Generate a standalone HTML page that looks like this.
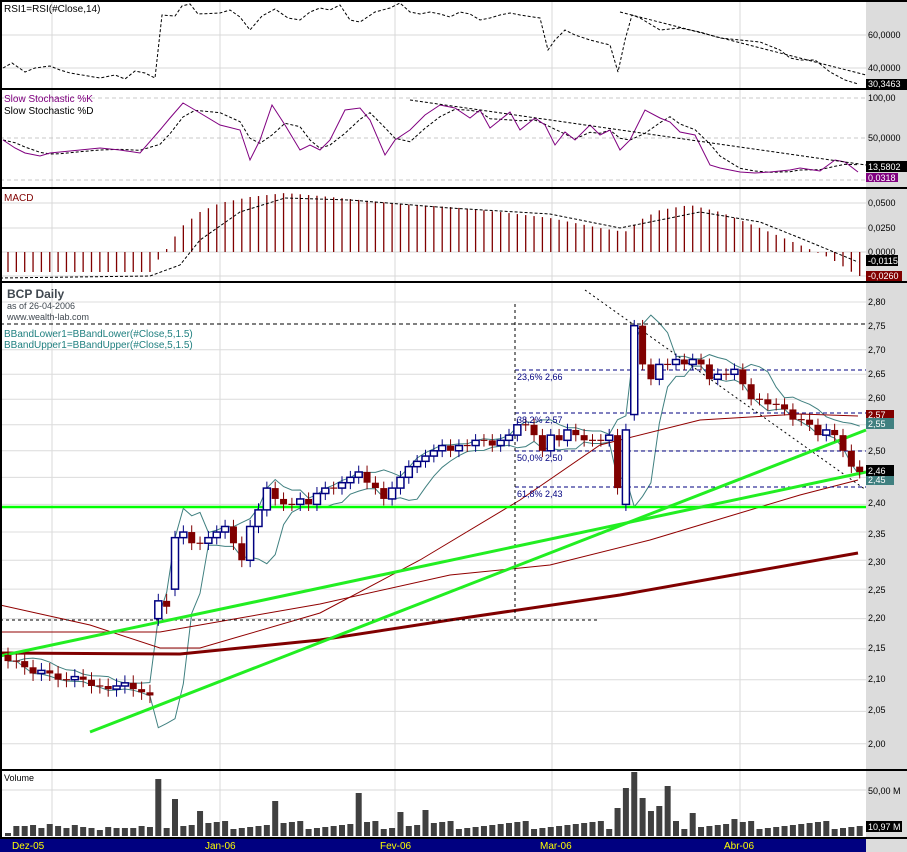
<!DOCTYPE html>
<html><head><meta charset="utf-8"><style>
html,body{margin:0;padding:0;background:#fff;}
svg{display:block;font-family:"Liberation Sans",sans-serif;}
</style></head><body>
<svg id="c" width="907" height="852" xmlns="http://www.w3.org/2000/svg">
<rect x="0" y="0" width="907" height="852" fill="#fff"/>
<rect x="866" y="0" width="41" height="852" fill="#dcdcdc"/>
<g id="grid"></g>
<g id="draw"></g>
<g stroke="#000" stroke-width="2">
<line x1="0" y1="1" x2="907" y2="1"/>
<line x1="0" y1="89" x2="907" y2="89"/>
<line x1="0" y1="188" x2="907" y2="188"/>
<line x1="0" y1="282" x2="907" y2="282"/>
<line x1="0" y1="770" x2="907" y2="770"/>
<line x1="0" y1="838" x2="907" y2="838"/>
<line x1="1" y1="0" x2="1" y2="852"/>
</g>
<rect x="0" y="839" width="866" height="13" fill="#000080"/>
<g font-size="10" fill="#ffff00">
<text x="12" y="849">Dez-05</text><text x="205" y="849">Jan-06</text><text x="380" y="849">Fev-06</text><text x="540" y="849">Mar-06</text><text x="724" y="849">Abr-06</text>
</g>
<g font-size="10" fill="#000">
<text x="4" y="12">RSI1=RSI(#Close,14)</text>
<text x="4" y="102" fill="#800080">Slow Stochastic %K</text>
<text x="4" y="114">Slow Stochastic %D</text>
<text x="4" y="201" fill="#800000">MACD</text>
<text x="4" y="781" font-size="9">Volume</text>
<text x="7" y="298" font-size="12" font-weight="bold" fill="#404850">BCP Daily</text>
<text x="7" y="309" font-size="9" fill="#404850">as of 26-04-2006</text>
<text x="7" y="320" font-size="9" fill="#404850">www.wealth-lab.com</text>
<text x="4" y="337" fill="#208080">BBandLower1=BBandLower(#Close,5,1.5)</text>
<text x="4" y="348" fill="#208080">BBandUpper1=BBandUpper(#Close,5,1.5)</text>
<g font-size="9" fill="#000080">
<text x="517" y="380">23,6% 2,66</text><text x="517" y="423">38,2% 2,57</text><text x="517" y="461">50,0% 2,50</text><text x="517" y="497">61,8% 2,43</text>
</g>
</g>
<g font-size="9" fill="#000">
<text x="868" y="38">60,0000</text><text x="868" y="71">40,0000</text>
<rect x="866" y="79" width="41" height="10" fill="#000"/><text x="868" y="87" fill="#fff">30,3463</text>
<text x="868" y="101">100,00</text><text x="868" y="141">50,0000</text>
<rect x="866" y="173" width="32" height="9" fill="#800080"/><text x="868" y="181" fill="#fff">0,0318</text>
<rect x="866" y="161" width="41" height="11" fill="#000"/><text x="868" y="170" fill="#fff">13,5802</text>
<text x="868" y="206">0,0500</text><text x="868" y="231">0,0250</text><text x="868" y="255">0,0000</text>
<rect x="866" y="255" width="32" height="11" fill="#000"/><text x="868" y="264" fill="#fff">-0,0115</text>
<rect x="866" y="271" width="36" height="10" fill="#800000"/><text x="868" y="279" fill="#fff">-0,0260</text>
<text x="868" y="305">2,80</text><text x="868" y="329">2,75</text><text x="868" y="353">2,70</text><text x="868" y="377">2,65</text><text x="868" y="401">2,60</text><text x="868" y="454">2,50</text><text x="868" y="506">2,40</text><text x="868" y="537">2,35</text><text x="868" y="565">2,30</text><text x="868" y="593">2,25</text><text x="868" y="621">2,20</text><text x="868" y="651">2,15</text><text x="868" y="682">2,10</text><text x="868" y="713">2,05</text><text x="868" y="747">2,00</text>
<rect x="866" y="410" width="28" height="10" fill="#800000"/><text x="868" y="418" fill="#fff">2,57</text>
<rect x="866" y="418" width="28" height="11" fill="#408080"/><text x="868" y="427" fill="#fff">2,55</text>
<rect x="866" y="474" width="28" height="11" fill="#408080"/><text x="868" y="483" fill="#fff">2,45</text>
<rect x="866" y="465" width="28" height="11" fill="#000"/><text x="868" y="474" fill="#fff">2,46</text>
<text x="868" y="794">50,00 M</text>
<rect x="866" y="821" width="36" height="11" fill="#000"/><text x="868" y="830" fill="#fff">10,97 M</text>
</g>
</svg>
<script>
var NS="http://www.w3.org/2000/svg";
var G=document.getElementById("grid"),D=document.getElementById("draw");
function el(p,t,a){var e=document.createElementNS(NS,t);for(var k in a)e.setAttribute(k,a[k]);p.appendChild(e);return e;}
function pl(p,pts,st,w,dash){var s=pts.map(function(q){return q[0].toFixed(1)+","+q[1].toFixed(1)}).join(" ");var a={points:s,fill:"none",stroke:st,"stroke-width":w};if(dash)a["stroke-dasharray"]=dash;return el(p,"polyline",a);}
function ln(p,x1,y1,x2,y2,st,w,dash){var a={x1:x1,y1:y1,x2:x2,y2:y2,stroke:st,"stroke-width":w};if(dash)a["stroke-dasharray"]=dash;return el(p,"line",a);}
[52,220,395,552,740].forEach(function(x){ln(G,x,0,x,838,"#d8d8d8",1);});
[35,68].forEach(function(y){ln(G,0,y,866,y,"#d8d8d8",1);});
[98,138,180].forEach(function(y){ln(G,0,y,866,y,"#c8c8c8",1,"4,3");});
[203,228,252,276].forEach(function(y){ln(G,0,y,866,y,"#d8d8d8",1);});
function py(p){return 302+1313*Math.log(2.8/p);}
[2.8,2.7,2.65,2.6,2.55,2.5,2.45,2.4,2.35,2.3,2.25,2.2,2.15,2.1,2.05,2.0].forEach(function(p){ln(G,0,py(p),866,py(p),"#dcdcdc",1);});
ln(G,0,790,866,790,"#d8d8d8",1);
pl(D,[[3,68],[12,63],[25,72],[35,68],[50,66],[60,70],[70,73],[100,78],[115,75],[125,79],[135,71],[145,73],[155,78],[162,15],[175,16],[182,6],[190,4],[198,14],[220,13],[230,10],[240,17],[250,30],[262,16],[275,9],[288,18],[300,20],[310,12],[320,8],[330,10],[340,5],[350,20],[360,22],[375,12],[390,8],[400,3],[410,12],[420,14],[430,12],[440,14],[450,17],[460,12],[470,14],[480,20],[490,18],[500,15],[510,13],[520,15],[540,18],[548,50],[555,40],[565,30],[575,35],[590,40],[610,45],[618,72],[625,40],[632,15],[640,18],[660,30],[680,28],[700,32],[720,38],[740,40],[760,42],[780,50],[790,58],[800,60],[815,60],[830,72],[845,80],[858,84]],"#000",1,"3,2");
ln(D,620,12,866,75,"#000",1,"3,2");
var K=[[3,140],[15,148],[25,153],[40,156],[50,153],[60,152],[80,150],[100,148],[120,150],[140,153],[160,130],[170,118],[183,103],[195,110],[220,125],[240,130],[250,160],[260,140],[272,105],[285,125],[300,150],[310,145],[320,150],[330,140],[345,110],[360,108],[370,120],[385,155],[395,140],[410,130],[425,115],[440,105],[455,108],[470,118],[480,110],[490,128],[500,120],[510,112],[520,130],[535,118],[545,125],[555,145],[565,132],[575,140],[590,125],[600,135],[610,130],[620,150],[630,140],[645,110],[660,118],[670,122],[680,132],[695,135],[710,165],[720,168],[740,172],[755,173],[770,172],[790,170],[800,168],[820,171],[835,160],[845,162],[858,172]];
var Dd=K.map(function(q,i){var a=K[Math.max(0,i-1)],b=K[Math.max(0,i-2)];return [q[0],(q[1]+a[1]+b[1])/3];});
pl(D,Dd,"#000",1,"3,2");
pl(D,K,"#800080",1);
ln(D,410,100,866,165,"#000",1,"3,2");
var C=[2.13,2.13,2.12,2.11,2.115,2.11,2.10,2.10,2.105,2.10,2.09,2.09,2.085,2.09,2.095,2.085,2.08,2.075,2.23,2.22,2.34,2.35,2.33,2.33,2.34,2.35,2.36,2.33,2.30,2.36,2.39,2.43,2.41,2.40,2.40,2.41,2.40,2.42,2.43,2.43,2.44,2.45,2.46,2.44,2.43,2.41,2.43,2.45,2.47,2.48,2.49,2.50,2.51,2.50,2.51,2.51,2.52,2.52,2.51,2.52,2.53,2.55,2.55,2.53,2.50,2.53,2.52,2.54,2.53,2.52,2.52,2.52,2.53,2.43,2.54,2.75,2.67,2.64,2.67,2.67,2.68,2.67,2.68,2.67,2.64,2.65,2.65,2.66,2.63,2.60,2.60,2.59,2.59,2.58,2.56,2.56,2.55,2.53,2.54,2.53,2.50,2.47,2.46];
var O=C.map(function(c,i){return i==0?2.14:C[i-1];});O[74]=2.40;O[75]=2.57;O[73]=2.53;O[18]=2.20;O[20]=2.25;
function X(i){return 8+i*8.35;}
var up=[],lo=[];
for(var i=0;i<C.length;i++){var s=0,n=0;for(var j=Math.max(0,i-4);j<=i;j++){s+=C[j];n++;}var m=s/n,v=0;for(j=Math.max(0,i-4);j<=i;j++)v+=(C[j]-m)*(C[j]-m);var sd=Math.sqrt(v/n);up.push([X(i),py(m+1.5*sd)]);lo.push([X(i),py(m-1.5*sd)]);}
pl(D,up,"#408080",1);pl(D,lo,"#408080",1);
pl(D,[[0,605],[90,625],[160,648],[200,648],[320,613],[420,560],[520,500],[600,445],[700,420],[800,414],[858,416]],"#900000",1);
pl(D,[[0,632],[160,632],[320,604],[450,575],[550,565],[650,540],[700,525],[800,495],[858,480]],"#900000",1);
pl(D,[[0,653],[180,654],[320,640],[450,620],[620,595],[750,572],[858,553]],"#800000",3);
ln(D,0,324,866,324,"#000",1,"4,3");
[370,413,451,487].forEach(function(y){ln(D,515,y,866,y,"#000080",1,"4,3");});
ln(D,515,304,515,620,"#000",1,"3,3");
ln(D,0,620,600,620,"#000",1,"3,3");
ln(D,585,290,866,490,"#000",1,"2,3");
ln(D,0,507,866,507,"#00ff00",2.5);
ln(D,0,656,866,472,"#22ee22",3);
ln(D,90,732,866,430,"#22ee22",3);
for(i=0;i<C.length;i++){var x=X(i),o=O[i],c=C[i];var hi=Math.max(o,c)+0.012,lw=Math.min(o,c)-0.012;
 var upc=c>o+0.001;var col=upc?"#000080":"#800000";
 ln(D,x,py(hi),x,py(lw),col,1);
 var y1=py(Math.max(o,c)),y2=py(Math.min(o,c));
 if(Math.abs(y2-y1)<1.5){ln(D,x-3.5,y1,x+3.5,y1,col,1.2);}
 else if(upc){el(D,"rect",{x:x-3.5,y:y1,width:7,height:y2-y1,fill:"#fff",stroke:col,"stroke-width":1.5});}
 else{el(D,"rect",{x:x-3.5,y:y1,width:7,height:y2-y1,fill:col});}
}
function interp(pts,x){for(var k=1;k<pts.length;k++){if(x<=pts[k][0]){var a=pts[k-1],b=pts[k];return a[1]+(b[1]-a[1])*(x-a[0])/(b[0]-a[0]);}}return pts[pts.length-1][1];}
var M=[[0,272],[150,272],[160,257],[170,245],[180,228],[200,212],[220,203],[250,197],[285,193],[320,196],[360,200],[400,204],[450,207],[500,212],[550,218],[600,228],[625,232],[640,220],[660,210],[690,205],[720,212],[760,228],[800,245],[830,258],[858,276]];
for(i=0;i<C.length;i++){var x=X(i);ln(D,x,252,x,interp(M,x),"#800000",1.3);}
pl(D,[[0,278],[150,276],[180,265],[200,240],[240,212],[285,198],[350,200],[450,208],[550,214],[620,228],[650,222],[700,212],[760,222],[800,238],[858,262]],"#000",1,"3,2");
var V={18:57,20:37,23:25,32:35,42:43,47:24,50:26,73:28,74:48,75:64,76:38,77:25,78:30,79:50,82:23,87:17};
var base=[3,10,10,11,8,12,10,8,11,9,8,6,9,8,8,8,10,9];
for(i=0;i<C.length;i++){var h=V[i]||(7+((i*37)%9));if(i<18)h=base[i];var x=X(i);el(D,"rect",{x:x-3,y:836-h,width:6,height:h,fill:"#404040"});}
</script>
</body></html>
